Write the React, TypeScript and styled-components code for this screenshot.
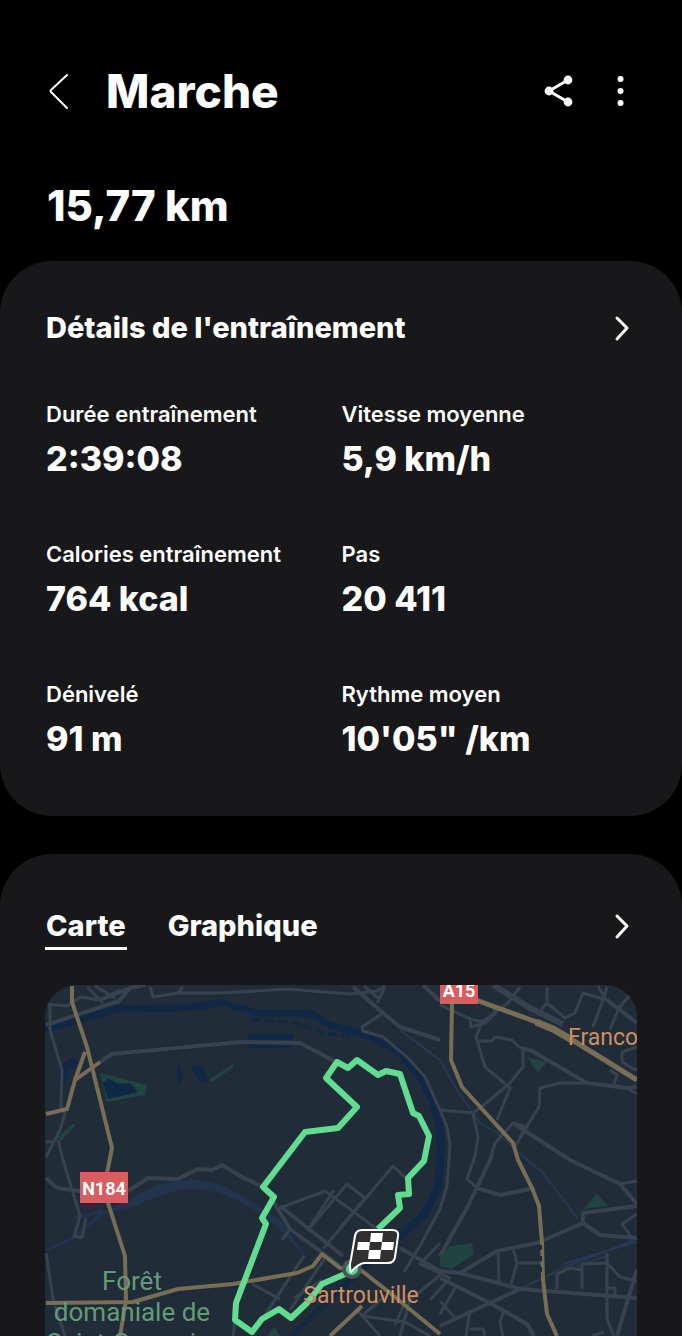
import React from "react";
import styled, { createGlobalStyle } from "styled-components";

const GlobalStyle = createGlobalStyle`
  * { box-sizing: border-box; }
  body { margin: 0; background: #000; }
  button { background: none; border: 0; padding: 0; color: inherit; font: inherit; cursor: pointer; }
  h1, h2, p, dl, dd { margin: 0; }
`;

const Page = styled.main`
  min-height: 100vh;
  overflow: hidden;
  background: #000;
  color: #fcfcfc;
  font-family: Inter, "Liberation Sans", sans-serif;
`;

const Header = styled.header`
  display: flex;
  align-items: center;
  height: 70px;
  margin-top: 56px;
  padding: 0 45px;
`;

const IconButton = styled.button`
  display: flex;
  align-items: center;
  justify-content: center;
  flex: none;
  width: 32px;
  height: 40px;

  svg { display: block; }
`;

const Title = styled.h1`
  flex: 1;
  margin-left: 29px;
  font-size: 46px;
  line-height: 56px;
  font-weight: 800;
`;

const Actions = styled.div`
  display: flex;
  gap: 30px;
`;

const Distance = styled.p`
  margin: 54px 47px 29px;
  font-size: 42px;
  line-height: 52px;
  font-weight: 800;
`;

const Card = styled.section<{ $open?: boolean }>`
  padding: ${(p) => (p.$open ? "52px 45px 0" : "47px 45px 55px")};
  border-radius: ${(p) => (p.$open ? "52px 52px 0 0" : "52px")};
  background: #18181a;

  & + & { margin-top: 38px; }
`;

const CardHead = styled.div`
  display: flex;
  justify-content: space-between;
  align-items: flex-start;
`;

const CardTitle = styled.h2`
  padding-left: 1px;
  font-size: 29px;
  line-height: 40px;
  font-weight: 800;
`;

const Stats = styled.dl`
  display: grid;
  grid-template-columns: 1fr 1fr;
  row-gap: 59px;
  margin-top: 52px;
  padding-left: 1px;
`;

const StatLabel = styled.dt`
  font-size: 22px;
  line-height: 28px;
  font-weight: 600;
`;

const StatValue = styled.dd`
  margin-top: 9px;
  font-size: 34px;
  line-height: 44px;
  font-weight: 800;
`;

const Tabs = styled.div`
  display: flex;
  gap: 40px;
`;

const Tab = styled.button<{ $active?: boolean }>`
  padding: 0 1px 1px;
  border-bottom: 3px solid ${(p) => (p.$active ? "#fcfcfc" : "transparent")};
  font-size: 29px;
  line-height: 40px;
  font-weight: 800;
`;

const MapFrame = styled.div`
  margin-top: 35px;
  border-radius: 32px 32px 0 0;
  overflow: hidden;
  background: #202c38;

  svg { display: block; width: 100%; height: auto; }
  text { font-family: Roboto, sans-serif; }
`;

const Chevron = () => (
  <svg width="32" height="40" viewBox="0 0 32 40" fill="none" stroke="#fcfcfc" strokeWidth="3" strokeLinecap="round" strokeLinejoin="round">
    <path d="M12 10 L22 20 L12 31" />
  </svg>
);

const stats = [
  ["Durée entraînement", "2:39:08"],
  ["Vitesse moyenne", "5,9 km/h"],
  ["Calories entraînement", "764 kcal"],
  ["Pas", "20 411"],
  ["Dénivelé", "91 m"],
  ["Rythme moyen", "10'05\" /km"],
];

const minorRoads = [
  "50,1005 50,1030 62,1070 61,1107 65,1113 60,1130 46,1157",
  "58,1140 63,1160 80,1216 74,1236 82,1238 86,1218",
  "46,1253 53,1299 65,1336",
  "46,1004 67,1006 80,997 100,1000 120,990",
  "87,987 103,1003", "95,986 115,998",
  "150,987 153,997 178,993 220,993 240,992 287,989 350,994 377,991 385,986",
  "183,987 177,994", "385,987 377,1003", "364,986 378,998",
  "46,1142 52,1142",
  "383,1013 362,1027 363,1031 383,1037 407,1057 425,1077 440,1110 447,1127 450,1145 447,1186 440,1209 420,1246 404,1272",
  "280,1208 325,1191 377,1229", "307,1231 347,1184 365,1198",
  "323,1249 393,1166 407,1179", "334,1190 307,1231", "365,1198 340,1228",
  "252,1284 280,1299", "255,1330 304,1256", "290,1310 325,1258", "290,1229 282,1240",
  "240,1284 233,1336", "294,1298 322,1280",
  "357,1310 380,1336", "385,1296 362,1316 405,1322 430,1336", "406,1300 395,1325", "440,1275 410,1300 400,1336",
  "440,1005 473,1020 488,1022", "520,987 508,1003 482,1022 476,1037 485,1067 503,1082 510,1088 497,1120",
  "493,1004 495,1014 485,1023 471,1027 470,1018",
  "477,1041 492,1041 495,1037 512,1040 520,1048",
  "523,1050 523,1067 510,1083 490,1100 473,1113 440,1110",
  "587,1083 560,1083 540,1088 539,1107 520,1137",
  "490,1160 495,1143 513,1123 526,1127", "528,1125 514,1148",
  "547,987 547,1003 537,1015", "547,1003 565,1018 575,1013 583,993 607,1000",
  "607,987 603,1000 593,1027", "598,986 606,1000", "620,1005 610,1030", "620,1007 637,986",
  "637,1047 622,1052 622,1062 632,1068 637,1070", "610,1070 617,1075 613,1087",
  "627,1088 637,1094",
  "473,1113 478,1137 475,1156 467,1179 477,1188",
  "498,1253 499,1283", "513,1248 517,1263 511,1284", "517,1263 541,1263",
  "557,1289 557,1274 570,1268 582,1270", "582,1289 582,1264 607,1263",
  "607,1253 607,1319 614,1336", "607,1263 620,1277 637,1281", "607,1288 615,1288 615,1296",
  "470,1310 466,1336", "470,1329 483,1329 485,1336", "504,1310 500,1322 503,1336",
  "440,1301 455,1318", "455,1288 440,1314", "637,1214 622,1224 632,1238",
  "440,1243 420,1264 450,1278 430,1300", "420,1264 440,1271",
  "620,1184 637,1181", "592,1336 604,1332",
];

const mainRoads = [
  "46,1025 107,1005 119,1001 130,988 145,985", "100,1000 130,988",
  "100,1062 112,1054 240,1042 300,1043 340,1064",
  "353,987 383,1013 400,1027 440,1040",
  "46,1178 57,1188 80,1191", "128,1191 148,1178 178,1179 198,1169 212,1170 222,1165 240,1176 265,1188 290,1229 320,1251 340,1266",
  "280,1206 343,1256",
  "400,1248 440,1271 460,1273 497,1251 537,1243 583,1223 583,1213 637,1206",
  "583,1223 600,1235 637,1238",
  "460,1273 520,1289 637,1298",
  "440,1278 490,1303 527,1324 534,1336", "520,1289 440,1326",
  "637,1269 617,1336",
  "477,1188 500,1195 530,1189", "492,1156 468,1206 440,1256",
  "513,1123 570,1160 620,1184 637,1204",
  "520,1048 530,1050 587,1083 627,1088 637,1087",
  "607,1000 637,1023", "423,985 440,1001",
];

const yellowRoads = [
  "46,1114 67,1109 75,1080 85,1052", "75,1080 100,1062",
  "72,986 72,1002 87,1047 112,1148 107,1173 108,1203 125,1256 126,1301 120,1336",
  "46,1303 133,1302 178,1289 233,1284 297,1273 313,1266 322,1254 340,1268 362,1271 390,1293 440,1334",
  "362,1306 330,1336",
  "452,1004 451,1060 462,1087 513,1143 518,1160 532,1188 539,1206 542,1243 543,1279 547,1314 557,1336",
];

const River = () => (
  <g fill="none" stroke="#102745" strokeLinejoin="round">
    <path strokeWidth="7" d="M45 1030 L87 1017 L117 1009 L180 1008 L223 1003 L240 1008 L257 1013 L310 1013 L330 1025 L373 1037 L400 1052" />
    <path strokeWidth="8" d="M340 1028 L373 1037 L400 1052 L420 1077 L433 1100 L439 1123 L441 1150 L438 1189 L423 1216 L400 1236 L370 1262" />
    <path strokeWidth="6" stroke="#13283f" d="M370 1262 L307 1321 L290 1338" />
    <path strokeWidth="3" strokeDasharray="9 4" d="M252 1019 L296 1023 L320 1032 L350 1037" />
    <path strokeWidth="8" d="M62 1082 L65 1068 L77 1060" />
    <path strokeWidth="6" d="M248 1037 H293 M248 1045 H290" />
    <path stroke="#21334f" strokeWidth="3" d="M45 1251 L73 1238 L103 1213 L133 1205 L160 1191 M74 1218 L103 1211" />
    <path stroke="none" fill="#22344d" d="M103 1213 L133 1197 L160 1184 L193 1179 Q222 1183 242 1196 L280 1220 L310 1262 L275 1225 L240 1201 Q210 1187 182 1189 Q155 1196 133 1207 Z" />
    <path stroke="#263852" strokeWidth="2" d="M400 1030 L440 1060 L457 1090 L480 1123 L497 1133 L523 1156 L543 1173 L577 1218 M520 1289 L563 1268 L637 1239 M563 1264 L637 1242 M575 1267 L607 1256" />
    <path stroke="none" fill="#102745" d="M178 1063 L184 1077 L177 1087 Z M190 1066 L203 1066 L209 1080 L200 1082 Z" />
  </g>
);

const Parks = () => (
  <g fill="#204440">
    <path d="M100 1073 L147 1085 L145 1095 L107 1102 Z" />
    <path fill="#102745" d="M103 1083 L108 1078 L118 1084 L130 1083 L138 1092 L108 1099 Z" />
    <path d="M209 1080 L233 1064 L234 1067 L212 1082 Z M58 1137 L74 1123 L75 1126 L61 1141 Z" />
    <path d="M527 1057 L547 1062 L538 1073 Z M583 1209 L597 1194 L608 1206 Z" />
    <path d="M440 1256 L450 1246 L472 1243 L474 1254 L452 1269 L440 1266 Z" />
    <path d="M268 1336 L274 1326 L280 1336 Z" />
  </g>
);

const RouteMap = () => (
  <svg viewBox="45 985 592 351" role="img" aria-label="Carte du parcours">
    <River />
    <Parks />
    <g fill="none" stroke="#38424f" strokeLinejoin="round">
      <g strokeWidth="3">{minorRoads.map((p) => <polyline key={p} points={p} />)}</g>
      <g strokeWidth="4">{mainRoads.map((p) => <polyline key={p} points={p} />)}</g>
      <path strokeWidth="6" d="M493 985 L530 1008 L563 1024" />
    </g>
    <g fill="none" stroke="#786d55" strokeWidth="4" strokeLinejoin="round">
      {yellowRoads.map((p) => <polyline key={p} points={p} />)}
      <path strokeWidth="5" d="M476 1000 L553 1028 L637 1080" />
      <path strokeWidth="7" d="M536 1022 L553 1029 L572 1040" />
    </g>
    <path stroke="#202c38" strokeWidth="2" strokeDasharray="5 6" d="M541 1245 V1272" />
    <path
      d="M378 1229 L400 1208 L398 1195 L409 1194 L408 1178 L424 1161 L429 1136 L419 1116 L413 1113 L400 1074 L386 1071 L378 1075 L357 1060 L348 1068 L337 1062 L326 1078 L357 1107 L338 1128 L305 1132 L263 1187 L274 1197 L262 1218 L266 1224 L236 1303 L235 1320 L252 1332 L262 1319 L279 1309 L291 1318 L307 1303 L322 1284 L352 1271"
      fill="none" stroke="#61dc90" strokeWidth="6" strokeLinejoin="round"
    />
    <circle cx="352" cy="1269" r="8" fill="#55d88a" stroke="#4c5553" strokeWidth="4" />
    <path d="M362 1230 H392 Q399 1230 398 1236 L395 1257 Q394 1263 388 1263 H364 Q358 1264 351 1272 Q349 1266 351 1259 L355 1236 Q356 1230 362 1230 Z" fill="#303030" stroke="#fff" strokeWidth="2" strokeLinejoin="round" />
    <path fill="#fff" d="M371 1233 H383 L382 1242 H370 Z M358 1242 H370 L369 1250 H357 Z M382 1242 H394 L393 1250 H381 Z M369 1250 H381 L380 1259 H368 Z" />
    <g fontWeight="700" fontSize="18" textAnchor="middle">
      <rect x="440" y="980" width="38" height="24" fill="#d75d60" />
      <text x="459" y="997" fill="#fff">A15</text>
      <rect x="80" y="1172" width="48" height="31" fill="#d75d60" />
      <text x="104" y="1195" fill="#fff">N184</text>
    </g>
    <g fontSize="23" fill="#d18e61">
      <text x="568" y="1045">Franco</text>
      <text x="361" y="1303" textAnchor="middle">Sartrouville</text>
    </g>
    <g fontSize="26" fill="#649b77" textAnchor="middle">
      <text x="132" y="1290">Forêt</text>
      <text x="132" y="1321">domaniale de</text>
      <text x="132" y="1352">Saint-Germain-</text>
    </g>
  </svg>
);

export default function App() {
  return (
    <Page>
      <GlobalStyle />
      <Header>
        <IconButton aria-label="Retour">
          <svg width="32" height="40" viewBox="0 0 32 40" fill="none" stroke="#fcfcfc" strokeWidth="2" strokeLinecap="round" strokeLinejoin="round">
            <path d="M22 4 L6 19 Q5 20 6 21 L22 37" />
          </svg>
        </IconButton>
        <Title>Marche</Title>
        <Actions>
          <IconButton aria-label="Partager">
            <svg width="32" height="40" viewBox="0 0 32 40" fill="#fcfcfc">
              <path d="M25 9 L6 20 L25 31" fill="none" stroke="#fcfcfc" strokeWidth="3" />
              <circle cx="25" cy="9" r="4.4" />
              <circle cx="6" cy="20" r="4.4" />
              <circle cx="25" cy="31" r="4.4" />
            </svg>
          </IconButton>
          <IconButton aria-label="Plus d'options">
            <svg width="32" height="40" viewBox="0 0 32 40" fill="#fcfcfc">
              <circle cx="15.500" cy="8" r="3" />
              <circle cx="15.500" cy="20" r="3" />
              <circle cx="15.500" cy="32" r="3" />
            </svg>
          </IconButton>
        </Actions>
      </Header>
      <Distance>15,77 km</Distance>
      <Card>
        <CardHead>
          <CardTitle>Détails de l'entraînement</CardTitle>
          <IconButton aria-label="Afficher les détails"><Chevron /></IconButton>
        </CardHead>
        <Stats>
          {stats.map(([label, value]) => (
            <div key={label}>
              <StatLabel>{label}</StatLabel>
              <StatValue>{value}</StatValue>
            </div>
          ))}
        </Stats>
      </Card>
      <Card $open>
        <CardHead>
          <Tabs role="tablist">
            <Tab role="tab" aria-selected="true" $active>Carte</Tab>
            <Tab role="tab" aria-selected="false">Graphique</Tab>
          </Tabs>
          <IconButton aria-label="Afficher la carte"><Chevron /></IconButton>
        </CardHead>
        <MapFrame><RouteMap /></MapFrame>
      </Card>
    </Page>
  );
}
